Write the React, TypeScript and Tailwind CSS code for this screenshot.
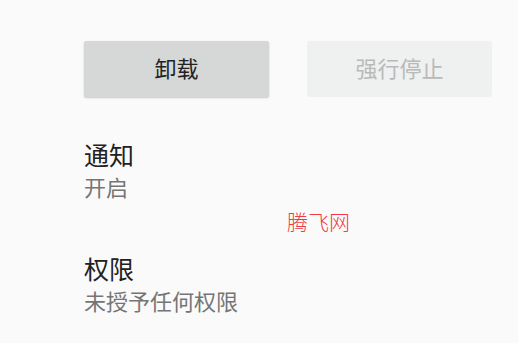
import React from "react";

export default function App() {
  const font = { fontFamily: '"Noto Sans CJK SC", "Noto Sans", sans-serif' };
  return (
    <div className="w-[518px] h-[343px] bg-[#fafafa] overflow-hidden" style={font}>
      <div className="flex gap-[38px] pl-[84px] pt-[41px]">
        <div className="w-[185px] h-[56px] pb-[3px] rounded-[2px] bg-[#d6d7d7] shadow-[0_1px_2px_rgba(0,0,0,0.2)] flex items-center justify-center text-[22px] text-[#222]">
          卸载
        </div>
        <div className="w-[185px] h-[56px] pb-[3px] rounded-[2px] bg-[#eff0f0] flex items-center justify-center text-[22px] text-[#b9b9b9]">
          强行停止
        </div>
      </div>
      <div className="pl-[84px] pt-[42px]">
        <div className="text-[25px] leading-[30px] text-[#212121]">通知</div>
        <div className="text-[22px] leading-[26px] text-[#757575] mt-[4px]">开启</div>
      </div>
      <div className="pl-[287px] pt-[10px] text-[21px] leading-[24px] text-[#f23a45] font-light">腾飞网</div>
      <div className="pl-[84px] pt-[20px]">
        <div className="text-[25px] leading-[30px] text-[#212121]">权限</div>
        <div className="text-[22px] leading-[26px] text-[#757575] mt-[4px]">未授予任何权限</div>
      </div>
    </div>
  );
}
